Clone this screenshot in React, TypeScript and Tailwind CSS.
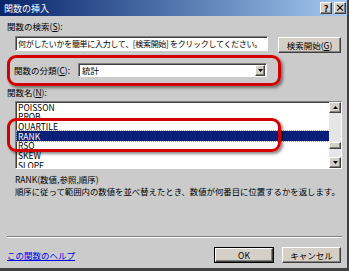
import React from 'react';

const raised =
  'border border-t-white border-l-white border-r-[#404040] border-b-[#404040] shadow-[inset_-1px_-1px_0_#808080] bg-[#d4d0c8]';
const sunken = 'border border-t-[#808080] border-l-[#808080] border-r-white border-b-white shadow-[inset_1px_1px_0_#404040] bg-white';

function Arrow({ up }: { up?: boolean }) {
  return (
    <svg width="5" height="3" viewBox="0 0 5 3">
      <polygon points={up ? '2.5,0 5,3 0,3' : '0,0 5,0 2.5,3'} fill="#000" />
    </svg>
  );
}

const functions = ['POISSON', 'PROB', 'QUARTILE', 'RANK', 'RSQ', 'SKEW', 'SLOPE'];

export default function App() {
  return (
    <div className="relative w-[349px] h-[271px] overflow-hidden bg-[#cbcbcb] border-r-2 border-b-[3px] border-[#404040] font-['Noto_Sans_CJK_JP','Noto_Sans',sans-serif] text-[8.5px] leading-none text-black">
      {/* title bar */}
      <div className="h-[16px] flex items-center bg-linear-to-r from-[#0a246a] to-[#a6caf0] pl-[4px] pr-[1px]">
        <span className="text-white text-[9px]">関数の挿入</span>
        <div className="ml-auto flex gap-[2px]">
          <div className={`w-[12px] h-[12px] flex items-center justify-center text-[9px] font-bold ${raised}`}>?</div>
          <div className={`w-[12px] h-[12px] flex items-center justify-center text-[10px] font-bold ${raised}`}>×</div>
        </div>
      </div>

      <div className="pl-[7px] pr-[5px]">
        <div className="mt-[6px] h-[10px]">
          関数の検索(<span className="underline">S</span>):
        </div>

        <div className="mt-[4px] flex items-start">
          <div className={`ml-[8px] w-[253px] h-[15px] flex items-center pl-[2px] text-[8px] tracking-[-0.3px] whitespace-nowrap ${sunken}`}>
            何がしたいかを簡単に入力して、[検索開始] をクリックしてください。
          </div>
          <div className={`ml-[10px] mt-[1px] w-[63px] h-[16px] flex items-center justify-center ${raised}`}>
            検索開始(<span className="underline">G</span>)
          </div>
        </div>

        <div className="mt-[10px] flex items-center">
          <span className="ml-[7px] w-[64px]">
            関数の分類(<span className="underline">C</span>):
          </span>
          <div className={`w-[189px] h-[14px] flex items-center pl-[3px] pr-[1px] ${sunken}`}>
            <span>統計</span>
            <div className={`ml-auto w-[10px] h-[11px] flex items-center justify-center ${raised}`}>
              <Arrow />
            </div>
          </div>
        </div>

        <div className="mt-[11px] h-[9px]">
          関数名(<span className="underline">N</span>):
        </div>

        <div className={`mt-[4px] ml-[8px] w-[327px] h-[68px] flex overflow-hidden ${sunken}`}>
          <div className="flex-1 pl-[1px]">
            {functions.map((f) =>
              f === 'RANK' ? (
                <div
                  key={f}
                  className="h-[9.7px] flex items-center pl-[1px] bg-[#0a1f78] text-white outline outline-dotted outline-[#9aa0c0]"
                >
                  {f}
                </div>
              ) : (
                <div key={f} className="h-[9.7px] flex items-center pl-[1px]">
                  {f}
                </div>
              )
            )}
          </div>
          <div className="w-[12px] flex flex-col bg-[#e6e6e6]">
            <div className={`h-[11px] flex items-center justify-center ${raised}`}>
              <Arrow up />
            </div>
            <div className="flex-1">
              <div className={`mt-[29px] h-[7px] ${raised}`} />
            </div>
            <div className={`h-[11px] flex items-center justify-center ${raised}`}>
              <Arrow />
            </div>
          </div>
        </div>

        <div className="mt-[6px] ml-[8px] h-[9px]">RANK(数値,参照,順序)</div>
        <div className="mt-[3px] ml-[8px] h-[9px] whitespace-nowrap text-[8.4px]">
          順序に従って範囲内の数値を並べ替えたとき、数値が何番目に位置するかを返します。
        </div>

        <div className="mt-[40px] h-[2px] w-[335px] border-t border-t-[#808080] border-b border-b-white" />

        <div className="mt-[9px] flex items-center">
          <span className="text-[#0000ee] underline">この関数のヘルプ</span>
          <div className="ml-auto mr-[1px] flex gap-[8px] items-center">
            <div className="w-[60px] h-[16px] border border-black">
              <div className={`w-full h-full flex items-center justify-center ${raised}`}>OK</div>
            </div>
            <div className={`w-[59px] h-[16px] flex items-center justify-center ${raised}`}>キャンセル</div>
          </div>
        </div>
      </div>

      {/* annotation marks */}
      <div className="absolute left-[7px] top-[55px] w-[274px] h-[31px] rounded-[9px] border-[3px] border-[#d40000] shadow-[2px_2px_3px_rgba(0,0,0,0.45)]" />
      <div className="absolute left-[7px] top-[118px] w-[274px] h-[34px] rounded-[9px] border-[3px] border-[#d40000] shadow-[2px_2px_3px_rgba(0,0,0,0.45)]" />
    </div>
  );
}
